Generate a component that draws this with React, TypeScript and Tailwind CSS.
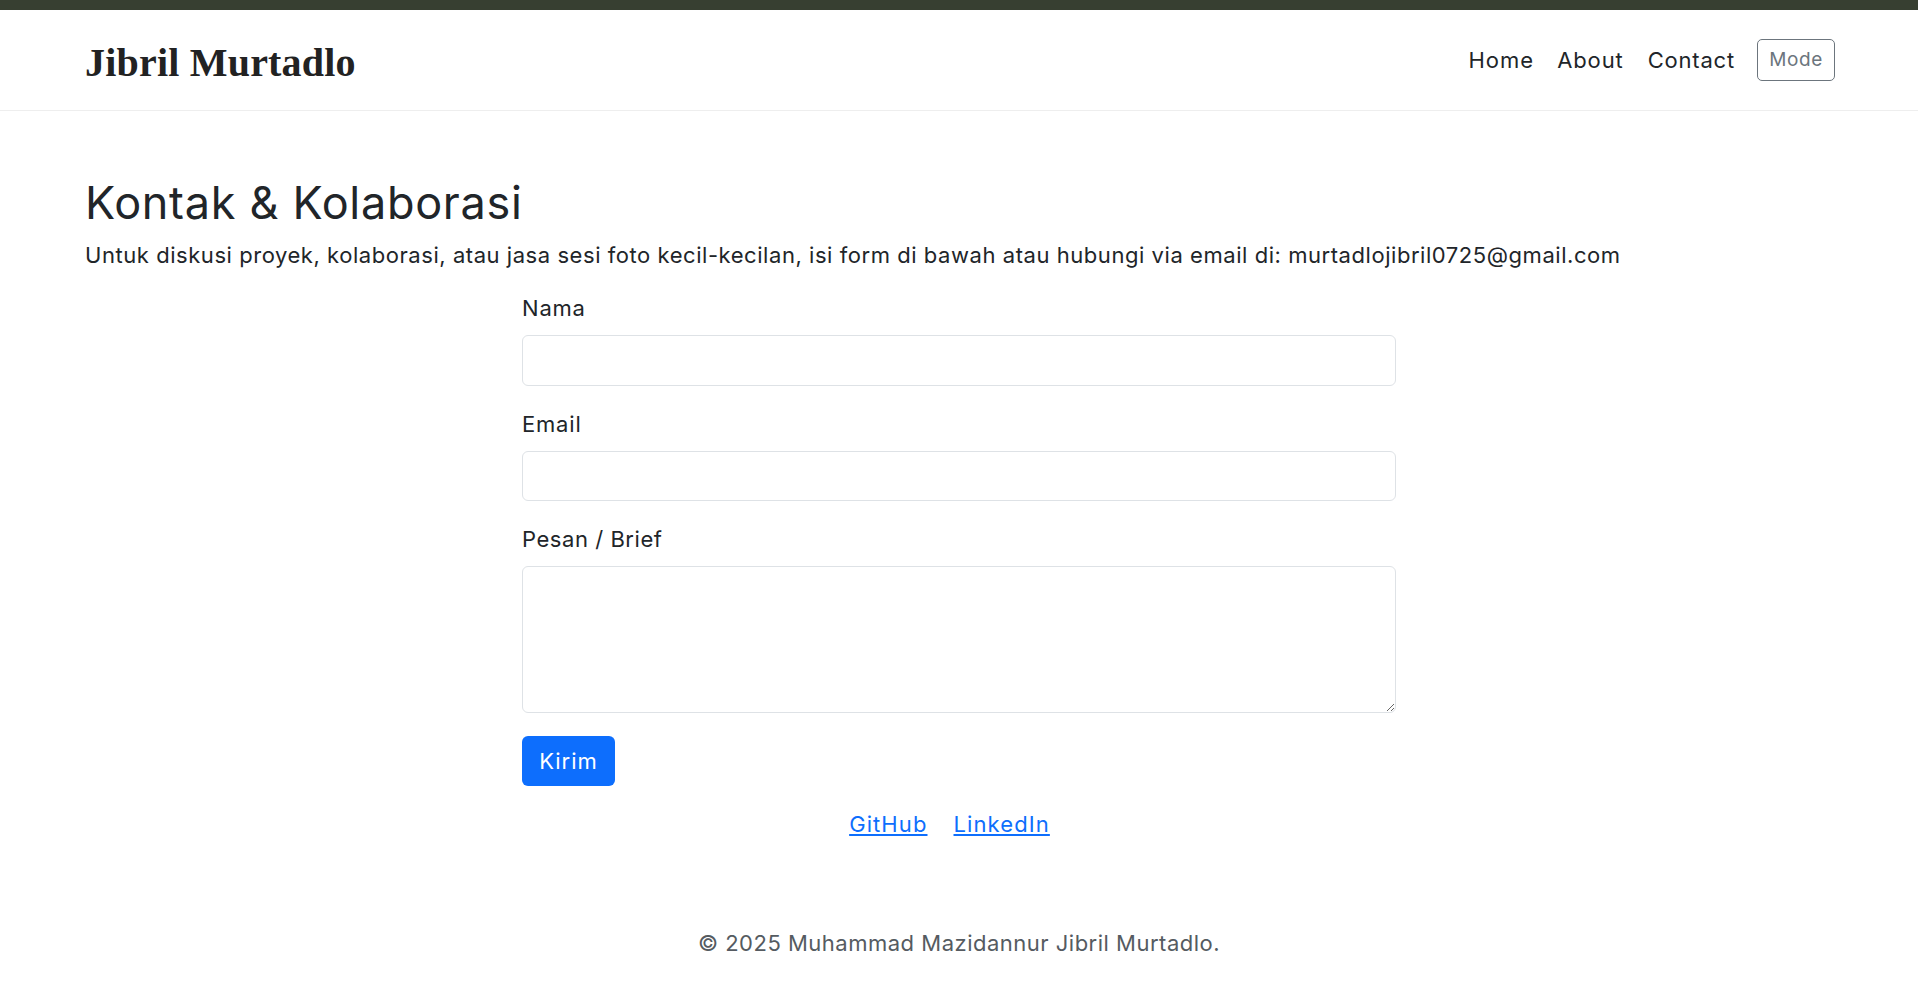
export default function App() {
  return (
    <div className="min-h-screen bg-white text-[#212529] font-['Inter',_'Noto_Sans',_sans-serif]">
      <div className="h-[10px] bg-[#373f31]" />

      {/* Navbar */}
      <header className="h-[101px] border-b border-[#eeeeee] pl-[85px] pr-[83px] pt-[5px] flex items-center justify-between">
        <a href="#" className="font-['Liberation_Serif',_serif] font-bold text-[40px] leading-none text-[#222] tracking-[0.2px]">
          Jibril Murtadlo
        </a>
        <nav className="flex items-center -mt-[4px]">
          <a href="#" className="text-[22px] tracking-[1px] text-[#212529] mr-[23px]">Home</a>
          <a href="#" className="text-[22px] tracking-[0.9px] text-[#212529] mr-[24px]">About</a>
          <a href="#" className="text-[22px] tracking-[0.8px] text-[#212529] mr-[22px]">Contact</a>
          <button className="w-[78px] h-[42px] border border-[#6c757d] rounded-[5px] text-[19px] tracking-[0.6px] text-[#6c757d] -mt-[1px]">
            Mode
          </button>
        </nav>
      </header>

      {/* Contact section */}
      <main className="px-[85px] pt-[65px]">
        <h1 className="text-[45px] leading-[53px] font-normal tracking-[0.7px] text-[#212529]">Kontak &amp; Kolaborasi</h1>
        <p className="mt-[10px] text-[22px] leading-[33px] tracking-[0.55px]">
          Untuk diskusi proyek, kolaborasi, atau jasa sesi foto kecil-kecilan, isi form di bawah atau hubungi via email di: murtadlojibril0725@gmail.com
        </p>

        <form className="w-[874px] mx-auto mt-[20px]" onSubmit={(e) => e.preventDefault()}>
          <div>
            <label className="block text-[22px] leading-[33px] tracking-[0.8px] mb-[10px]">Nama</label>
            <input type="text" className="block w-full h-[51px] border border-[#dee2e6] rounded-[6px] px-3 outline-none" />
          </div>
          <div className="mt-[22px]">
            <label className="block text-[22px] leading-[33px] tracking-[0.8px] mb-[10px]">Email</label>
            <input type="email" className="block w-full h-[50px] border border-[#dee2e6] rounded-[6px] px-3 outline-none" />
          </div>
          <div className="mt-[22px]">
            <label className="block text-[22px] leading-[33px] tracking-[0.55px] mb-[10px]">Pesan / Brief</label>
            <textarea className="block w-full h-[147px] border border-[#dee2e6] rounded-[6px] px-3 py-2 outline-none resize-y" />
          </div>
          <button type="submit" className="mt-[23px] w-[93px] h-[50px] bg-[#0d6efd] text-white text-[22px] tracking-[1px] rounded-[6px]">
            Kirim
          </button>

          <div className="mt-[22px] flex justify-center text-[22px] leading-[33px] tracking-[1.1px]">
            <a href="#" className="text-[#0d6efd] underline mr-[26px]">GitHub</a>
            <a href="#" className="text-[#0d6efd] underline mr-[19px]">LinkedIn</a>
          </div>
        </form>
      </main>

      <footer className="mt-[86px] pb-[43px] text-center text-[22px] leading-[33px] tracking-[0.5px] text-[#555b61]">
        © 2025 Muhammad Mazidannur Jibril Murtadlo.
      </footer>
    </div>
  );
}
